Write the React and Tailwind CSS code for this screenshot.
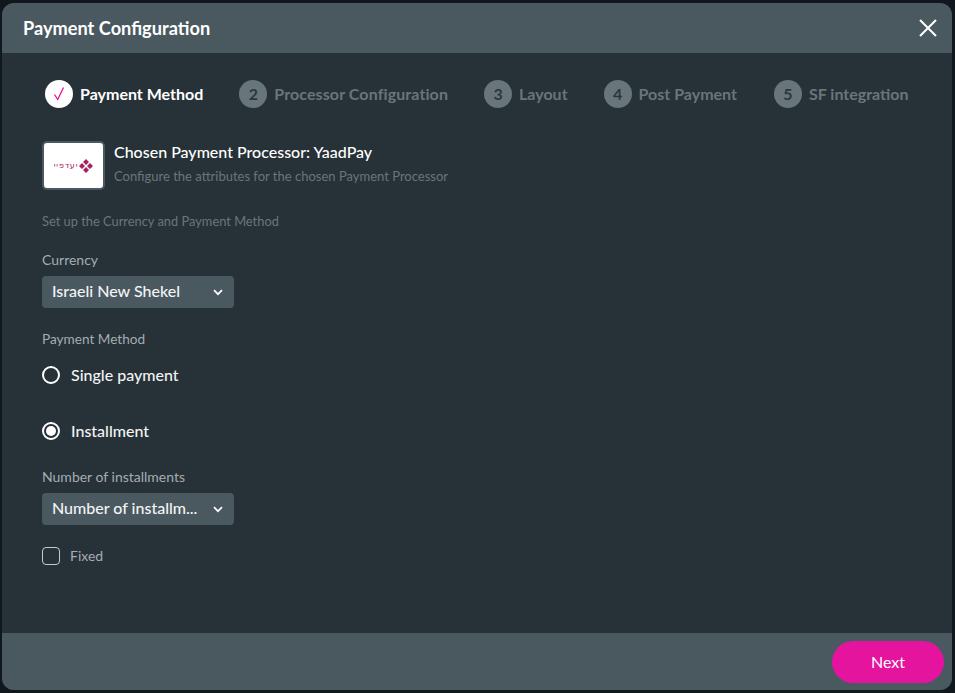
import React from "react";

const steps = [
  { n: "2", label: "Processor Configuration", extra: "tracking-[0.1px]", ml: "ml-[36px]" },
  { n: "3", label: "Layout", extra: "", ml: "ml-[36px]" },
  { n: "4", label: "Post Payment", extra: "", ml: "ml-[36px]" },
  { n: "5", label: "SF integration", extra: "", ml: "ml-[37px]" },
];

function Chevron() {
  return (
    <svg width="10" height="7" viewBox="0 0 10 7" fill="none" className="shrink-0">
      <path d="M1 1.2 L5 5.2 L9 1.2" stroke="#ffffff" strokeWidth="1.7" />
    </svg>
  );
}

function Select({ children }) {
  return (
    <div className="w-[192px] h-[32px] bg-[#4a5960] rounded-[4px] flex items-center justify-between pl-[10px] pr-[11px] text-[16px] font-medium text-[#f2f4f5]">
      <span className="-mt-[2px]">{children}</span>
      <Chevron />
    </div>
  );
}

export default function App() {
  return (
    <div className="w-[955px] h-[693px] bg-[#10181d] pt-[3px] pl-[2px] overflow-hidden font-['Lato','Liberation_Sans',sans-serif]">
      <div className="w-[950px] h-[687px] bg-[#273138] rounded-[12px] overflow-hidden flex flex-col">
        <header className="h-[50px] shrink-0 bg-[#4a5960] flex items-center justify-between pl-[21px] pr-[15px]">
          <h1 className="text-[18.2px] font-bold text-white leading-none">Payment Configuration</h1>
          <svg width="18" height="18" viewBox="0 0 18 18" fill="none">
            <path d="M1 1 L17 17 M17 1 L1 17" stroke="#ffffff" strokeWidth="2" />
          </svg>
        </header>

        <main className="flex-1 pl-[40px] pt-[27px]">
          <div className="flex items-center h-[28px] text-[16px] font-bold pl-[3px]">
            <div className="w-[28px] h-[28px] rounded-full bg-white flex items-center justify-center">
              <svg width="14" height="16" viewBox="0 0 14 16" fill="none">
                <path d="M2.5 8.5 L5.7 13.5 L11.5 1.5" stroke="#e5149f" strokeWidth="1.3" />
              </svg>
            </div>
            <span className="ml-[7px] text-white">Payment Method</span>
            {steps.map((s) => (
              <div key={s.n} className={`flex items-center ${s.ml}`}>
                <div className="w-[28px] h-[28px] rounded-full bg-[#68767c] flex items-center justify-center text-[#2c373d] text-[16px]">
                  {s.n}
                </div>
                <span className={`ml-[7px] text-[#68767c] ${s.extra}`}>{s.label}</span>
              </div>
            ))}
          </div>

          <div className="flex items-center mt-[33px]">
            <div className="w-[63px] h-[49px] bg-white border-2 border-[#4a5960] rounded-[5px] flex items-center justify-center gap-[1px]">
              <span className="text-[8px] leading-none tracking-[0.8px] text-[#a8215f] font-['DejaVu_Sans',sans-serif]">יעדפיי</span>
              <svg width="14" height="14" viewBox="0 0 14 14" fill="#a8215f">
                <path d="M7 0 L10 3 L7 6 L4 3 Z M7 8 L10 11 L7 14 L4 11 Z M3 4 L6 7 L3 10 L0 7 Z M11 4 L14 7 L11 10 L8 7 Z" />
              </svg>
            </div>
            <div className="ml-[9px] -mt-[5px]">
              <div className="text-[16px] leading-[18px] font-medium text-white">Chosen Payment Processor: YaadPay</div>
              <div className="text-[13px] leading-[16px] mt-[7px] text-[#68767c]">Configure the attributes for the chosen Payment Processor</div>
            </div>
          </div>

          <p className="text-[12.85px] leading-[16px] mt-[23px] text-[#68767c]">Set up the Currency and Payment Method</p>

          <label className="block text-[14px] leading-[16px] mt-[23px] mb-[8px] text-[#a3adb2]">Currency</label>
          <Select>Israeli New Shekel</Select>

          <div className="text-[13.6px] leading-[16px] mt-[23px] text-[#a3adb2]">Payment Method</div>

          <div className="flex items-center mt-[19px] h-[18px]">
            <div className="w-[18px] h-[18px] rounded-full border-2 border-white" />
            <span className="ml-[11px] text-[16px] font-medium text-[#f2f4f5]">Single payment</span>
          </div>

          <div className="flex items-center mt-[38px] h-[18px]">
            <div className="w-[18px] h-[18px] rounded-full border-2 border-white flex items-center justify-center">
              <div className="w-[10px] h-[10px] rounded-full bg-white" />
            </div>
            <span className="ml-[11px] text-[16px] font-medium text-[#f2f4f5]">Installment</span>
          </div>

          <label className="block text-[14px] leading-[16px] mt-[29px] mb-[8px] text-[#a3adb2]">Number of installments</label>
          <Select>Number of installm...</Select>

          <div className="flex items-center mt-[22px] h-[18px]">
            <div className="w-[18px] h-[18px] rounded-[4px] border border-[#c3cacd]" />
            <span className="ml-[10px] -mt-[2px] text-[14px] text-[#a3adb2]">Fixed</span>
          </div>
        </main>

        <footer className="h-[57px] shrink-0 bg-[#4a5960] flex items-center justify-end pr-[8px]">
          <button className="w-[112px] h-[42px] rounded-full bg-[#e5149f] text-white text-[16px] flex items-center justify-center">
            Next
          </button>
        </footer>
      </div>
    </div>
  );
}
